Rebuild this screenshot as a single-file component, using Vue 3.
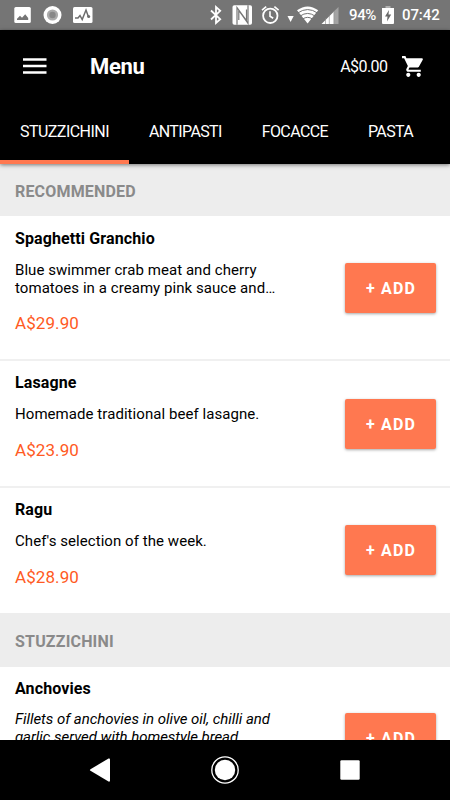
<script setup>
const tabs = ['STUZZICHINI', 'ANTIPASTI', 'FOCACCE', 'PASTA']

const sections = [
  {
    title: 'RECOMMENDED',
    items: [
      {
        name: 'Spaghetti Granchio',
        lines: ['Blue swimmer crab meat and cherry', 'tomatoes in a creamy pink sauce and…'],
        price: 'A$29.90',
      },
      { name: 'Lasagne', lines: ['Homemade traditional beef lasagne.'], price: 'A$23.90' },
      { name: 'Ragu', lines: ["Chef's selection of the week."], price: 'A$28.90' },
    ],
  },
  {
    title: 'STUZZICHINI',
    items: [
      {
        name: 'Anchovies',
        lines: ['Fillets of anchovies in olive oil, chilli and', 'garlic served with homestyle bread.'],
        price: '',
        italic: true,
      },
    ],
  },
]
</script>

<template>
  <div class="screen">
    <header class="status">
      <svg class="status-icons" width="340" height="30" viewBox="0 0 340 30">
        <rect x="14.3" y="7" width="16.5" height="16" rx="1.5" fill="#fff" />
        <path d="M17 20v-1.2l3-3 2 2 3.2-3.5 3 3.7v2z" fill="#757575" />
        <circle cx="52.5" cy="15" r="9" fill="#fff" />
        <circle cx="52.5" cy="15" r="5.6" fill="#ababab" />
        <circle cx="52.5" cy="15" r="3.2" fill="#888" />
        <rect x="73" y="7" width="19.5" height="16" rx="1.5" fill="#fff" />
        <path d="M75 18h3l2-2.5 2.2 4 3.8-9.500 2.500 7" fill="none" stroke="#6d6d6d" stroke-width="1.5" />
        <circle cx="88.700" cy="16.500" r="1.500" fill="#6d6d6d" />
        <path d="M211 10.500l9.200 8.700-4.200 3.800V7l4.200 3.800-9.200 8.700" fill="none" stroke="#fff" stroke-width="1.800" />
        <rect x="232.500" y="5.300" width="19.500" height="19.400" rx="1.800" fill="#fff" />
        <path d="M237 24.700V7.500l9.500 13.200V9.500M248 5.300v18L238.800 10.500V20" fill="none" stroke="#757575" stroke-width="1.200" />
        <circle cx="270.300" cy="15.800" r="7.200" fill="none" stroke="#fff" stroke-width="1.800" />
        <path d="M270 11.300v5l3.200 2M262 10.200l4.200-3.600M278.600 10.200l-4.200-3.600" fill="none" stroke="#fff" stroke-width="1.600" />
        <path d="M287.500 16h6.200l-3.100 6z" fill="#fff" />
        <path d="M297 10.300q10.600-7.800 21.200 0L307.600 23.500z" fill="#fff" />
        <path d="M297.700 13q10-6.900 19.800 0M300.200 16q7.400-5.100 14.800 0M302.700 19q4.900-3.300 9.800 0" fill="none" stroke="#757575" stroke-width="1" />
        <path d="M338.500 7v17H334V11.200z" fill="#a3a3a3" />
        <path d="M321.500 24L334 11.400V24z" fill="#fff" />
        <path d="M325.500 18v6M329.300 14.500V24M333.800 11v13" stroke="#888" stroke-width=".6" />
      </svg>
      <span class="percent">94%</span>
      <svg class="battery" width="12" height="18" viewBox="0 0 12 18">
        <path d="M3.500 2H12v15q0 1-1 1H1q-1 0-1-1V2h3.500z" fill="#fff" />
        <path d="M3.500 0h5v2h-5z" fill="#b0b0b0" />
        <path d="M7 4L3 10.500h2.500L5 15.500l4.200-7H6.500z" fill="#696969" />
      </svg>
      <time class="clock">07:42</time>
    </header>

    <div class="top">
      <div class="bar">
        <svg class="menu" width="24" height="16" viewBox="0 0 24 16">
          <path d="M0 1.500h23.500M0 8h23.500M0 14.500h23.500" stroke="#fff" stroke-width="2.700" />
        </svg>
        <h1>Menu</h1>
        <span class="total">A$0.00</span>
        <svg class="cart" width="25" height="25" viewBox="0 0 24 24">
          <path fill="#fff" d="M7 18c-1.100 0-1.990.9-1.990 2S5.900 22 7 22s2-.9 2-2-.9-2-2-2zM1 2v2h2l3.600 7.590-1.350 2.450c-.16.28-.25.61-.25.96 0 1.100.9 2 2 2h12v-2H7.420c-.14 0-.25-.11-.25-.25l.03-.12.9-1.630h7.450c.75 0 1.410-.41 1.750-1.030l3.580-6.490A1 1 0 0 0 20 4H5.210l-.94-2H1zm16 16c-1.100 0-1.990.9-1.990 2s.89 2 1.990 2 2-.9 2-2-.9-2-2-2z" />
        </svg>
      </div>
      <nav class="tabs">
        <a v-for="(tab, i) in tabs" :key="tab" :class="['tab', { active: i === 0 }]"><span>{{ tab }}</span></a>
      </nav>
    </div>

    <main class="list">
      <section v-for="section in sections" :key="section.title">
        <h2>{{ section.title }}</h2>
        <article v-for="item in section.items" :key="item.name" :class="{ tall: item.lines.length > 1 }">
          <div class="info">
            <h3>{{ item.name }}</h3>
            <p :class="['desc', { italic: item.italic }]">
              <span v-for="line in item.lines" :key="line">{{ line }}</span>
            </p>
            <p class="price">{{ item.price }}</p>
          </div>
          <button type="button">+ ADD</button>
        </article>
      </section>
    </main>

    <footer class="nav">
      <svg width="22" height="26" viewBox="0 0 22 26"><path d="M1.500 12.200L19.500 1.500q1.500-.5 1.500 1v21q0 1.500-1.500 1L1.500 13.800q-1.200-.8 0-1.600z" fill="#fff" /></svg>
      <svg width="28" height="28" viewBox="0 0 28 28">
        <circle cx="14" cy="14" r="13.200" fill="none" stroke="#fff" stroke-width="1.300" />
        <circle cx="14" cy="14" r="10.200" fill="#fff" />
      </svg>
      <svg width="20" height="20" viewBox="0 0 20 20"><rect x=".3" y=".3" width="19.400" height="19.400" rx="1.200" fill="#fff" /></svg>
    </footer>
  </div>
</template>

<style>
body {
  background: #fff;
  overflow: hidden;
}
</style>

<style scoped>
.screen {
  width: 450px;
  height: 800px;
  display: flex;
  flex-direction: column;
  overflow: hidden;
  font-family: Roboto, sans-serif;
  color: #000;
}
h1, h2, h3, p {
  margin: 0;
}
.status {
  flex: none;
  height: 30px;
  display: flex;
  align-items: center;
  background: #757575;
  color: #fff;
}
.status-icons {
  flex: none;
}
.percent {
  width: 42px;
  padding-left: 9px;
  box-sizing: border-box;
  font-size: 15px;
  line-height: 32px;
  font-weight: 500;
  letter-spacing: -0.4px;
}
.battery {
  flex: none;
}
.clock {
  margin-left: 8px;
  font-size: 15px;
  font-weight: 500;
  line-height: 32px;
  letter-spacing: -0.1px;
}
.top {
  flex: none;
  height: 134px;
  position: relative;
  background: #000;
  color: #fff;
  box-shadow: 0 1px 4px rgba(0, 0, 0, 0.5);
}
.bar {
  height: 72px;
  display: flex;
  align-items: center;
  padding: 0 24px 0 23px;
}
h1 {
  margin-left: 43px;
  font-size: 22px;
  font-weight: 700;
  letter-spacing: -0.3px;
}
.total {
  margin-left: auto;
  font-size: 16px;
  letter-spacing: -0.550px;
}
.cart {
  margin-left: 13.500px;
}
.tabs {
  display: flex;
  height: 62px;
}
.tab {
  flex: none;
  box-sizing: border-box;
  padding: 0 20px;
  height: 62px;
  line-height: 59px;
  font-size: 16px;
  letter-spacing: -0.620px;
  border-bottom: 4px solid transparent;
}
.tab.active {
  letter-spacing: -0.540px;
  border-color: #ff7850;
}
.list {
  flex: 1;
  min-height: 0;
  overflow: hidden;
}
h2 {
  height: 52px;
  box-sizing: border-box;
  padding-left: 15px;
  background: #ededed;
  color: #8a8a8a;
  font-size: 16px;
  line-height: 55px;
  font-weight: 700;
  letter-spacing: 0.180px;
}
section + section h2 {
  height: 53.500px;
  line-height: 57px;
}
article {
  height: 127px;
  box-sizing: border-box;
  display: flex;
  align-items: center;
  justify-content: space-between;
  padding: 0 14px 0 15px;
  border-bottom: 2px solid #f0f0f0;
}
article.tall {
  height: 144.500px;
}
article:last-child {
  border-bottom-color: transparent;
  height: 125.500px;
}
article.tall:last-child {
  height: 143px;
}
.info {
  align-self: flex-start;
  padding-top: 12px;
}
.tall .info {
  padding-top: 12.600px;
}
h3 {
  font-size: 16px;
  line-height: 20px;
  font-weight: 700;
  letter-spacing: 0.110px;
}
.desc {
  margin-top: 13px;
  font-size: 15px;
  line-height: 17.500px;
  letter-spacing: 0.060px;
}
.tall .desc {
  margin-top: 12.200px;
  line-height: 18px;
}
.desc span {
  display: block;
  white-space: nowrap;
}
.tall .desc.italic {
  margin-top: 12.300px;
  line-height: 17.500px;
  font-style: italic;
  letter-spacing: -0.050px;
}
.price {
  margin-top: 17px;
  font-size: 17px;
  line-height: 20px;
  letter-spacing: 0.080px;
  color: #ff5a23;
}
.tall .price {
  margin-top: 16px;
}
button {
  width: 91px;
  height: 50px;
  margin-top: 2px;
  border: 0;
  padding: 1px 0 0 1px;
  border-radius: 2px;
  background: #ff7850;
  box-shadow: 0 1px 3px rgba(0, 0, 0, 0.35);
  color: #fff;
  font-family: inherit;
  font-size: 16px;
  font-weight: 700;
  letter-spacing: 1.200px;
}
.nav {
  flex: none;
  height: 60px;
  background: #000;
  display: grid;
  grid-template-columns: 22px 1fr 20px;
  align-items: center;
  justify-items: center;
  padding: 0 90px 0 89px;
}
.nav svg:nth-child(2) {
  margin-right: 2px;
}
</style>
